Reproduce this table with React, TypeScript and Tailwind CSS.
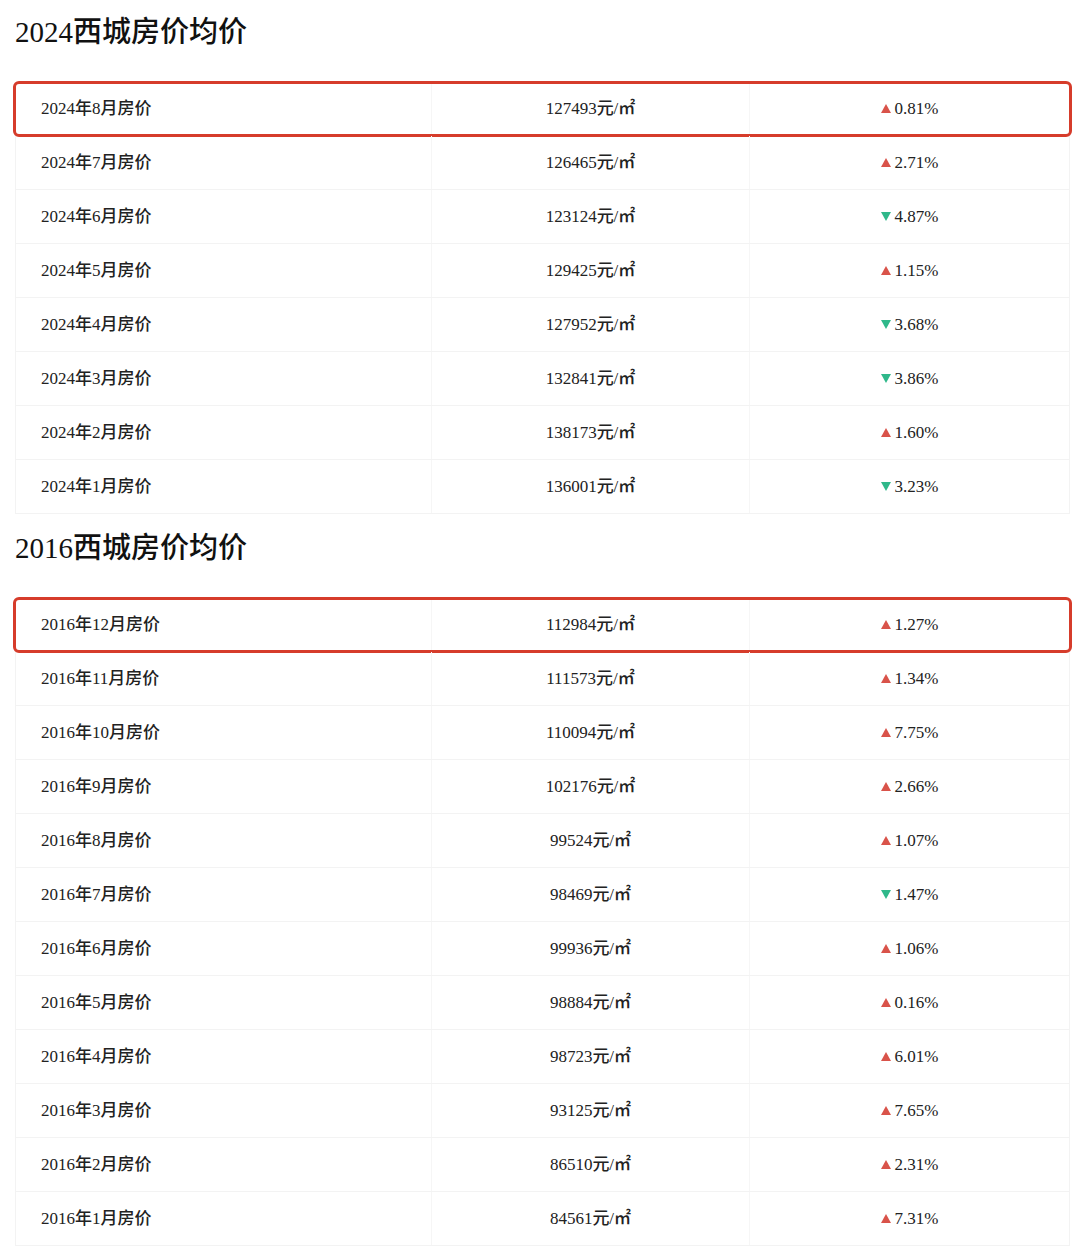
import React from "react";

type Row = { label: string; price: string; change: string; up: boolean };

const rows2024: Row[] = [
  { label: "2024年8月房价", price: "127493", change: "0.81%", up: true },
  { label: "2024年7月房价", price: "126465", change: "2.71%", up: true },
  { label: "2024年6月房价", price: "123124", change: "4.87%", up: false },
  { label: "2024年5月房价", price: "129425", change: "1.15%", up: true },
  { label: "2024年4月房价", price: "127952", change: "3.68%", up: false },
  { label: "2024年3月房价", price: "132841", change: "3.86%", up: false },
  { label: "2024年2月房价", price: "138173", change: "1.60%", up: true },
  { label: "2024年1月房价", price: "136001", change: "3.23%", up: false },
];

const rows2016: Row[] = [
  { label: "2016年12月房价", price: "112984", change: "1.27%", up: true },
  { label: "2016年11月房价", price: "111573", change: "1.34%", up: true },
  { label: "2016年10月房价", price: "110094", change: "7.75%", up: true },
  { label: "2016年9月房价", price: "102176", change: "2.66%", up: true },
  { label: "2016年8月房价", price: "99524", change: "1.07%", up: true },
  { label: "2016年7月房价", price: "98469", change: "1.47%", up: false },
  { label: "2016年6月房价", price: "99936", change: "1.06%", up: true },
  { label: "2016年5月房价", price: "98884", change: "0.16%", up: true },
  { label: "2016年4月房价", price: "98723", change: "6.01%", up: true },
  { label: "2016年3月房价", price: "93125", change: "7.65%", up: true },
  { label: "2016年2月房价", price: "86510", change: "2.31%", up: true },
  { label: "2016年1月房价", price: "84561", change: "7.31%", up: true },
];

const Arrow: React.FC<{ up: boolean }> = ({ up }) => (
  <svg width="10" height="9" viewBox="0 0 10 9" className="mr-[4px]">
    {up ? (
      <polygon points="5,0 10,9 0,9" fill="#d9534a" />
    ) : (
      <polygon points="0,0 10,0 5,9" fill="#2fb88a" />
    )}
  </svg>
);

const PriceTable: React.FC<{ rows: Row[] }> = ({ rows }) => (
  <div className="border-l border-r border-[#f3f3f3]">
    {rows.map((r, i) => (
      <div
        key={r.label}
        className="relative grid grid-cols-[415px_318px_1fr] h-[54px] border-b border-[#f3f3f3] text-[17px] text-[#222] font-medium"
      >
        <div className="flex items-center pl-[25px]">{r.label}</div>
        <div className="flex items-center justify-center border-l border-[#f6f6f6]">
          {r.price}元/㎡
        </div>
        <div className="flex items-center justify-center border-l border-[#f6f6f6]">
          <Arrow up={r.up} />
          {r.change}
        </div>
        {i === 0 && (
          <div className="absolute -left-[3px] -right-[3px] -top-[1px] -bottom-[2px] border-[3px] border-[#d63c2b] rounded-[6px]" />
        )}
      </div>
    ))}
  </div>
);

export default function App() {
  return (
    <div
      className="w-[1080px] min-h-[1256px] bg-white pl-[15px] pr-[10px] pt-[14px]"
      style={{ fontFamily: '"Liberation Serif", "Noto Sans CJK SC", serif' }}
    >
      <h1 className="text-[29px] leading-[36px] text-[#111] font-medium">2024西城房价均价</h1>
      <div className="mt-[32px]">
        <PriceTable rows={rows2024} />
      </div>
      <h1 className="mt-[16px] text-[29px] leading-[36px] text-[#111] font-medium">2016西城房价均价</h1>
      <div className="mt-[32px]">
        <PriceTable rows={rows2016} />
      </div>
    </div>
  );
}
